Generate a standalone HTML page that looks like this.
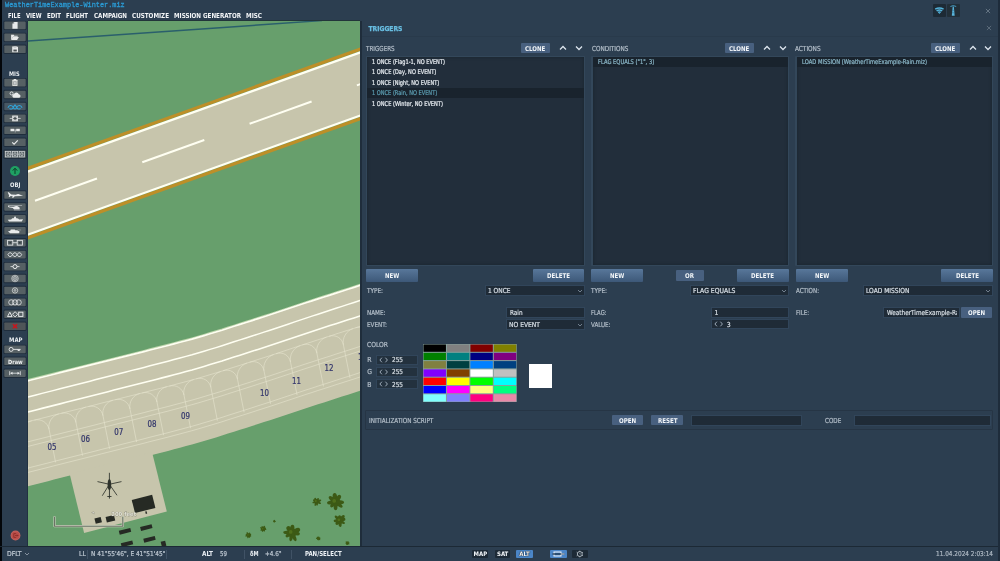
<!DOCTYPE html>
<html lang="en">
<head>
<meta charset="utf-8">
<title>Mission Editor - Triggers</title>
<style>
html,body{margin:0;padding:0;background:#2c3e50;}
body{width:1000px;height:561px;overflow:hidden;position:relative;}
#app{position:absolute;left:0;top:0;width:1000px;height:561px;overflow:hidden;will-change:transform;transform:translateZ(0);}
#app header,#app main,#app nav,#app aside,#app footer{display:block;position:static;margin:0;padding:0;}
#app div{position:absolute;box-sizing:border-box;}
#app svg{position:absolute;overflow:hidden;}
.t{position:absolute;white-space:nowrap;line-height:12px;display:block;}
.f1{font-family:"DejaVu Sans","Liberation Sans",sans-serif;}
.f2{font-family:"DejaVu Sans","Liberation Sans",sans-serif;font-weight:bold;}
.f3{font-family:"DejaVu Sans Condensed","DejaVu Sans","Liberation Sans",sans-serif;font-stretch:condensed;-webkit-text-stroke:0.22px currentColor;}
.f4{font-family:"DejaVu Sans Condensed","DejaVu Sans","Liberation Sans",sans-serif;font-stretch:condensed;font-weight:bold;}
.f5{font-family:"Liberation Mono","DejaVu Sans Mono",monospace;-webkit-text-stroke:0.3px currentColor;}
.f6{font-family:"Liberation Sans",sans-serif;}
.f7{font-family:"Liberation Sans",sans-serif;font-weight:bold;}
.btn{background:linear-gradient(#58779a,#3d5878);border-radius:1px;}
.sbtn{background:#48607f;border-radius:1px;}
.inp{background:#1f2b37;border:1px solid #31455a;}
.lst{background:#222e3b;box-shadow:inset 0 0 3px 0.5px #1b2631;}
.tb{background:#565c5f;border-radius:1px;box-shadow:0 0 0 1px #223040;}
</style>
</head>
<body>
<div id="app">
<div style="left:0.00px;top:0.00px;width:1000.00px;height:561.00px;background:#2c3e50;"></div>
<div style="left:0.00px;top:0.00px;width:2.00px;height:561.00px;background:#03060a;"></div>
<header id="menubar">
<span class="t f5" style="left:5.00px;transform-origin:0 0;top:-0.93px;font-size:7.42px;color:#2b9ad3;transform:scaleX(0.9288);">WeatherTimeExample-Winter.miz</span>
<span class="t f4" style="left:7.50px;transform-origin:0 0;top:9.53px;font-size:6.86px;color:#f4f6f8;transform:scaleX(0.8527);">FILE</span>
<span class="t f4" style="left:25.50px;transform-origin:0 0;top:9.53px;font-size:6.86px;color:#f4f6f8;transform:scaleX(0.8566);">VIEW</span>
<span class="t f4" style="left:47.00px;transform-origin:0 0;top:9.53px;font-size:6.86px;color:#f4f6f8;transform:scaleX(0.8836);">EDIT</span>
<span class="t f4" style="left:66.00px;transform-origin:0 0;top:9.53px;font-size:6.86px;color:#f4f6f8;transform:scaleX(0.8842);">FLIGHT</span>
<span class="t f4" style="left:93.50px;transform-origin:0 0;top:9.53px;font-size:6.86px;color:#f4f6f8;transform:scaleX(0.9008);">CAMPAIGN</span>
<span class="t f4" style="left:132.00px;transform-origin:0 0;top:9.53px;font-size:6.86px;color:#f4f6f8;transform:scaleX(0.9122);">CUSTOMIZE</span>
<span class="t f4" style="left:174.00px;transform-origin:0 0;top:9.53px;font-size:6.86px;color:#f4f6f8;transform:scaleX(0.9087);">MISSION GENERATOR</span>
<span class="t f4" style="left:246.00px;transform-origin:0 0;top:9.53px;font-size:6.86px;color:#f4f6f8;transform:scaleX(0.9191);">MISC</span>
</header>
<main id="map-view">
<svg viewBox="28 21 332.4 525" style="left:28px;top:21px;width:332.4px;height:525px;background:#679f6c">
<line x1="28" y1="41" x2="322" y2="20.6" stroke="#2a5f6c" stroke-width="1.5"/>
<polygon points="20,174.27 370,48.83 370,111.93 20,237.37" fill="#c7c5ac"/>
<line x1="20" y1="171.17" x2="370" y2="45.73" stroke="#bd8f28" stroke-width="3.2"/>
<line x1="20" y1="174.27" x2="370" y2="48.83" stroke="#fffff2" stroke-width="2.3"/>
<line x1="20" y1="240.57" x2="370" y2="115.13" stroke="#bd8f28" stroke-width="3.2"/>
<line x1="20" y1="237.47" x2="370" y2="112.03" stroke="#fffff2" stroke-width="2.3"/>
<line x1="35.0" y1="200.69" x2="97.0" y2="178.47" stroke="#fffff2" stroke-width="2.0"/>
<line x1="142.3" y1="162.23" x2="204.3" y2="140.01" stroke="#fffff2" stroke-width="2.0"/>
<line x1="249.6" y1="123.78" x2="311.6" y2="101.56" stroke="#fffff2" stroke-width="2.0"/>
<line x1="356.9" y1="85.32" x2="418.9" y2="63.10" stroke="#fffff2" stroke-width="2.0"/>
<polygon points="12.0,384.4 18.0,382.9 24.0,381.4 30.0,379.9 36.0,378.4 42.0,376.9 48.0,375.4 54.0,373.8 60.0,372.3 66.0,370.8 72.0,369.3 78.0,367.8 84.0,366.3 90.0,364.8 96.0,363.3 102.0,361.7 108.0,360.2 114.0,358.7 120.0,357.2 126.0,355.7 132.0,354.2 138.0,352.7 144.0,351.2 150.0,349.6 156.0,348.1 162.0,346.6 168.0,345.1 174.0,343.5 180.0,341.9 186.0,340.3 192.0,338.7 198.0,337.0 204.0,335.2 210.0,333.4 216.0,331.6 222.0,329.8 228.0,327.8 234.0,325.9 240.0,324.0 246.0,322.1 252.0,320.2 258.0,318.2 264.0,316.3 270.0,314.4 276.0,312.4 282.0,310.4 288.0,308.4 294.0,306.4 300.0,304.4 306.0,302.4 312.0,300.5 318.0,298.5 324.0,296.6 330.0,294.7 336.0,292.7 342.0,290.8 348.0,288.9 354.0,287.0 360.0,285.0 366.0,283.1 372.0,281.2 378.0,279.2 378.0,385.0 372.0,387.0 366.0,388.9 360.0,390.8 354.0,392.8 348.0,394.7 342.0,396.6 336.0,398.5 330.0,400.5 324.0,402.4 318.0,404.3 312.0,406.3 306.0,408.2 300.0,410.2 294.0,412.2 288.0,414.2 282.0,416.2 276.0,418.2 270.0,420.2 264.0,422.1 258.0,424.0 252.0,426.0 246.0,427.9 240.0,429.8 234.0,431.7 228.0,433.6 222.0,435.6 216.0,437.4 210.0,439.2 204.0,441.0 198.0,442.8 192.0,444.5 186.0,446.1 180.0,447.7 174.0,449.3 168.0,450.9 162.0,452.4 156.0,453.9 150.0,455.4 144.0,457.0 138.0,458.5 132.0,460.0 126.0,461.5 120.0,463.0 114.0,464.5 108.0,466.0 102.0,467.5 96.0,469.1 90.0,470.6 84.0,472.1 78.0,473.6 72.0,475.1 66.0,476.6 60.0,478.1 54.0,479.6 48.0,481.2 42.0,482.7 36.0,484.2 30.0,485.7 24.0,487.2 18.0,488.7 12.0,490.2" fill="#c7c5ac"/>
<polygon points="69.7,474 84.1,533 166.8,511.4 152,452 " fill="#c7c5ac"/>
<polyline points="12.0,445.8 18.0,444.3 24.0,442.8 30.0,441.3 36.0,439.8 42.0,438.3 48.0,436.8 54.0,435.2 60.0,433.7 66.0,432.2 72.0,430.7 78.0,429.2 84.0,427.7 90.0,426.2 96.0,424.7 102.0,423.1 108.0,421.6 114.0,420.1 120.0,418.6 126.0,417.1 132.0,415.6 138.0,414.1 144.0,412.6 150.0,411.0 156.0,409.5 162.0,408.0 168.0,406.5 174.0,404.9 180.0,403.3 186.0,401.7 192.0,400.1 198.0,398.4 204.0,396.6 210.0,394.8 216.0,393.0 222.0,391.2 228.0,389.2 234.0,387.3 240.0,385.4 246.0,383.5 252.0,381.6 258.0,379.6 264.0,377.7 270.0,375.8 276.0,373.8 282.0,371.8 288.0,369.8 294.0,367.8 300.0,365.8 306.0,363.8 312.0,361.9 318.0,359.9 324.0,358.0 330.0,356.1 336.0,354.1 342.0,352.2 348.0,350.3 354.0,348.4 360.0,346.4 366.0,344.5 372.0,342.6 378.0,340.6" fill="none" stroke="#e6e4cf" stroke-width="0.6"/>
<polyline points="12.0,450.4 18.0,448.9 24.0,447.4 30.0,445.9 36.0,444.4 42.0,442.9 48.0,441.4 54.0,439.8 60.0,438.3 66.0,436.8 72.0,435.3 78.0,433.8 84.0,432.3 90.0,430.8 96.0,429.3 102.0,427.7 108.0,426.2 114.0,424.7 120.0,423.2 126.0,421.7 132.0,420.2 138.0,418.7 144.0,417.2 150.0,415.6 156.0,414.1 162.0,412.6 168.0,411.1 174.0,409.5 180.0,407.9 186.0,406.3 192.0,404.7 198.0,403.0 204.0,401.2 210.0,399.4 216.0,397.6 222.0,395.8 228.0,393.8 234.0,391.9 240.0,390.0 246.0,388.1 252.0,386.2 258.0,384.2 264.0,382.3 270.0,380.4 276.0,378.4 282.0,376.4 288.0,374.4 294.0,372.4 300.0,370.4 306.0,368.4 312.0,366.5 318.0,364.5 324.0,362.6 330.0,360.7 336.0,358.7 342.0,356.8 348.0,354.9 354.0,353.0 360.0,351.0 366.0,349.1 372.0,347.2 378.0,345.2" fill="none" stroke="#e6e4cf" stroke-width="0.6"/>
<polyline points="12.0,472.0 18.0,470.5 24.0,469.0 30.0,467.5 36.0,466.0 42.0,464.5 48.0,463.0 54.0,461.4 60.0,459.9 66.0,458.4 72.0,456.9 78.0,455.4 84.0,453.9 90.0,452.4 96.0,450.9 102.0,449.3 108.0,447.8 114.0,446.3 120.0,444.8 126.0,443.3 132.0,441.8 138.0,440.3 144.0,438.8 150.0,437.2 156.0,435.7 162.0,434.2 168.0,432.7 174.0,431.1 180.0,429.5 186.0,427.9 192.0,426.3 198.0,424.6 204.0,422.8 210.0,421.0 216.0,419.2 222.0,417.4 228.0,415.4 234.0,413.5 240.0,411.6 246.0,409.7 252.0,407.8 258.0,405.8 264.0,403.9 270.0,402.0 276.0,400.0 282.0,398.0 288.0,396.0 294.0,394.0 300.0,392.0 306.0,390.0 312.0,388.1 318.0,386.1 324.0,384.2 330.0,382.3 336.0,380.3 342.0,378.4 348.0,376.5 354.0,374.6 360.0,372.6 366.0,370.7 372.0,368.8 378.0,366.8" fill="none" stroke="#e6e4cf" stroke-width="0.6"/>
<polyline points="12.0,476.4 18.0,474.9 24.0,473.4 30.0,471.9 36.0,470.4 42.0,468.9 48.0,467.4 54.0,465.8 60.0,464.3 66.0,462.8 72.0,461.3 78.0,459.8 84.0,458.3 90.0,456.8 96.0,455.3 102.0,453.7 108.0,452.2 114.0,450.7 120.0,449.2 126.0,447.7 132.0,446.2 138.0,444.7 144.0,443.2 150.0,441.6 156.0,440.1 162.0,438.6 168.0,437.1 174.0,435.5 180.0,433.9 186.0,432.3 192.0,430.7 198.0,429.0 204.0,427.2 210.0,425.4 216.0,423.6 222.0,421.8 228.0,419.8 234.0,417.9 240.0,416.0 246.0,414.1 252.0,412.2 258.0,410.2 264.0,408.3 270.0,406.4 276.0,404.4 282.0,402.4 288.0,400.4 294.0,398.4 300.0,396.4 306.0,394.4 312.0,392.5 318.0,390.5 324.0,388.6 330.0,386.7 336.0,384.7 342.0,382.8 348.0,380.9 354.0,379.0 360.0,377.0 366.0,375.1 372.0,373.2 378.0,371.2" fill="none" stroke="#e6e4cf" stroke-width="0.6"/>
<line x1="28.6" y1="469.2" x2="22.1" y2="436.2" stroke="#e6e4cf" stroke-width="0.6"/>
<path d="M22.1,436.2 C20.7,429.3 14.1,425.2 7.4,426.9" fill="none" stroke="#e6e4cf" stroke-width="0.6"/>
<path d="M22.1,436.2 C20.7,429.3 25.1,422.4 31.8,420.7" fill="none" stroke="#e6e4cf" stroke-width="0.6"/>
<line x1="55.6" y1="462.4" x2="49.1" y2="429.4" stroke="#e6e4cf" stroke-width="0.6"/>
<path d="M49.1,429.4 C47.7,422.5 41.1,418.4 34.4,420.1" fill="none" stroke="#e6e4cf" stroke-width="0.6"/>
<path d="M49.1,429.4 C47.7,422.5 52.1,415.6 58.8,413.9" fill="none" stroke="#e6e4cf" stroke-width="0.6"/>
<line x1="82.6" y1="455.6" x2="76.0" y2="422.6" stroke="#e6e4cf" stroke-width="0.6"/>
<path d="M76.0,422.6 C74.7,415.7 68.1,411.6 61.4,413.3" fill="none" stroke="#e6e4cf" stroke-width="0.6"/>
<path d="M76.0,422.6 C74.7,415.7 79.1,408.8 85.8,407.1" fill="none" stroke="#e6e4cf" stroke-width="0.6"/>
<line x1="109.6" y1="448.8" x2="103.0" y2="415.8" stroke="#e6e4cf" stroke-width="0.6"/>
<path d="M103.0,415.8 C101.7,408.9 95.1,404.8 88.4,406.5" fill="none" stroke="#e6e4cf" stroke-width="0.6"/>
<path d="M103.0,415.8 C101.7,408.9 106.0,402.0 112.8,400.3" fill="none" stroke="#e6e4cf" stroke-width="0.6"/>
<line x1="136.6" y1="442.0" x2="130.0" y2="409.0" stroke="#e6e4cf" stroke-width="0.6"/>
<path d="M130.0,409.0 C128.7,402.1 122.1,398.0 115.3,399.7" fill="none" stroke="#e6e4cf" stroke-width="0.6"/>
<path d="M130.0,409.0 C128.7,402.1 133.0,395.2 139.8,393.5" fill="none" stroke="#e6e4cf" stroke-width="0.6"/>
<line x1="163.6" y1="435.2" x2="157.0" y2="402.2" stroke="#e6e4cf" stroke-width="0.6"/>
<path d="M157.0,402.2 C155.6,395.3 149.1,391.2 142.3,392.9" fill="none" stroke="#e6e4cf" stroke-width="0.6"/>
<path d="M157.0,402.2 C155.6,395.3 160.0,388.4 166.8,386.7" fill="none" stroke="#e6e4cf" stroke-width="0.6"/>
<line x1="190.6" y1="428.2" x2="184.0" y2="395.2" stroke="#e6e4cf" stroke-width="0.6"/>
<path d="M184.0,395.2 C182.6,388.3 176.1,384.3 169.4,386.1" fill="none" stroke="#e6e4cf" stroke-width="0.6"/>
<path d="M184.0,395.2 C182.6,388.3 187.0,381.4 193.7,379.5" fill="none" stroke="#e6e4cf" stroke-width="0.6"/>
<line x1="217.4" y1="420.6" x2="210.9" y2="387.5" stroke="#e6e4cf" stroke-width="0.6"/>
<path d="M210.9,387.5 C209.5,380.7 203.0,376.8 196.3,378.8" fill="none" stroke="#e6e4cf" stroke-width="0.6"/>
<path d="M210.9,387.5 C209.5,380.7 213.8,373.6 220.5,371.6" fill="none" stroke="#e6e4cf" stroke-width="0.6"/>
<line x1="244.1" y1="412.3" x2="237.5" y2="379.2" stroke="#e6e4cf" stroke-width="0.6"/>
<path d="M237.5,379.2 C236.2,372.4 229.7,368.6 223.1,370.7" fill="none" stroke="#e6e4cf" stroke-width="0.6"/>
<path d="M237.5,379.2 C236.2,372.4 240.4,365.2 247.1,363.0" fill="none" stroke="#e6e4cf" stroke-width="0.6"/>
<line x1="270.6" y1="403.8" x2="264.0" y2="370.8" stroke="#e6e4cf" stroke-width="0.6"/>
<path d="M264.0,370.8 C262.7,363.9 256.2,360.1 249.6,362.2" fill="none" stroke="#e6e4cf" stroke-width="0.6"/>
<path d="M264.0,370.8 C262.7,363.9 266.9,356.7 273.6,354.6" fill="none" stroke="#e6e4cf" stroke-width="0.6"/>
<line x1="297.1" y1="395.1" x2="290.5" y2="362.1" stroke="#e6e4cf" stroke-width="0.6"/>
<path d="M290.5,362.1 C289.2,355.2 282.7,351.5 276.1,353.7" fill="none" stroke="#e6e4cf" stroke-width="0.6"/>
<path d="M290.5,362.1 C289.2,355.2 293.4,347.9 300.0,345.7" fill="none" stroke="#e6e4cf" stroke-width="0.6"/>
<line x1="323.5" y1="386.4" x2="316.9" y2="353.3" stroke="#e6e4cf" stroke-width="0.6"/>
<path d="M316.9,353.3 C315.6,346.5 309.1,342.7 302.5,344.8" fill="none" stroke="#e6e4cf" stroke-width="0.6"/>
<path d="M316.9,353.3 C315.6,346.5 319.9,339.2 326.5,337.1" fill="none" stroke="#e6e4cf" stroke-width="0.6"/>
<line x1="350.0" y1="377.9" x2="343.4" y2="344.8" stroke="#e6e4cf" stroke-width="0.6"/>
<path d="M343.4,344.8 C342.1,338.0 335.6,334.2 329.0,336.3" fill="none" stroke="#e6e4cf" stroke-width="0.6"/>
<path d="M343.4,344.8 C342.1,338.0 346.3,330.7 353.0,328.6" fill="none" stroke="#e6e4cf" stroke-width="0.6"/>
<line x1="376.5" y1="369.3" x2="369.9" y2="336.3" stroke="#e6e4cf" stroke-width="0.6"/>
<path d="M369.9,336.3 C368.6,329.5 362.1,325.6 355.5,327.8" fill="none" stroke="#e6e4cf" stroke-width="0.6"/>
<path d="M369.9,336.3 C368.6,329.5 372.8,322.2 379.5,320.1" fill="none" stroke="#e6e4cf" stroke-width="0.6"/>
<polyline points="12.0,425.7 18.0,424.2 24.0,422.7 30.0,421.2 36.0,419.7 42.0,418.2 48.0,416.7 54.0,415.1 60.0,413.6 66.0,412.1 72.0,410.6 78.0,409.1 84.0,407.6 90.0,406.1 96.0,404.6 102.0,403.0 108.0,401.5 114.0,400.0 120.0,398.5 126.0,397.0 132.0,395.5 138.0,394.0 144.0,392.5 150.0,390.9 156.0,389.4 162.0,387.9 168.0,386.4 174.0,384.8 180.0,383.2 186.0,381.6 192.0,380.0 198.0,378.3 204.0,376.5 210.0,374.7 216.0,372.9 222.0,371.1 228.0,369.1 234.0,367.2 240.0,365.3 246.0,363.4 252.0,361.5 258.0,359.5 264.0,357.6 270.0,355.7 276.0,353.7 282.0,351.7 288.0,349.7 294.0,347.7 300.0,345.7 306.0,343.7 312.0,341.8 318.0,339.8 324.0,337.9 330.0,336.0 336.0,334.0 342.0,332.1 348.0,330.2 354.0,328.3 360.0,326.3 366.0,324.4 372.0,322.5 378.0,320.5" fill="none" stroke="#e6e4cf" stroke-width="0.6"/>
<polyline points="12.0,383.7 18.0,382.2 24.0,380.7 30.0,379.2 36.0,377.7 42.0,376.2 48.0,374.7 54.0,373.1 60.0,371.6 66.0,370.1 72.0,368.6 78.0,367.1 84.0,365.6 90.0,364.1 96.0,362.6 102.0,361.0 108.0,359.5 114.0,358.0 120.0,356.5 126.0,355.0 132.0,353.5 138.0,352.0 144.0,350.5 150.0,348.9 156.0,347.4 162.0,345.9 168.0,344.4 174.0,342.8 180.0,341.2 186.0,339.6 192.0,338.0 198.0,336.3 204.0,334.5 210.0,332.7 216.0,330.9 222.0,329.1 228.0,327.1 234.0,325.2 240.0,323.3 246.0,321.4 252.0,319.5 258.0,317.5 264.0,315.6 270.0,313.7 276.0,311.7 282.0,309.7 288.0,307.7 294.0,305.7 300.0,303.7 306.0,301.7 312.0,299.8 318.0,297.8 324.0,295.9 330.0,294.0 336.0,292.0 342.0,290.1 348.0,288.2 354.0,286.3 360.0,284.3 366.0,282.4 372.0,280.5 378.0,278.5" fill="none" stroke="#b9d3a8" stroke-width="1.2"/>
<polyline points="12.0,384.8 18.0,383.3 24.0,381.8 30.0,380.3 36.0,378.8 42.0,377.3 48.0,375.8 54.0,374.2 60.0,372.7 66.0,371.2 72.0,369.7 78.0,368.2 84.0,366.7 90.0,365.2 96.0,363.7 102.0,362.1 108.0,360.6 114.0,359.1 120.0,357.6 126.0,356.1 132.0,354.6 138.0,353.1 144.0,351.6 150.0,350.0 156.0,348.5 162.0,347.0 168.0,345.5 174.0,343.9 180.0,342.3 186.0,340.7 192.0,339.1 198.0,337.4 204.0,335.6 210.0,333.8 216.0,332.0 222.0,330.2 228.0,328.2 234.0,326.3 240.0,324.4 246.0,322.5 252.0,320.6 258.0,318.6 264.0,316.7 270.0,314.8 276.0,312.8 282.0,310.8 288.0,308.8 294.0,306.8 300.0,304.8 306.0,302.8 312.0,300.9 318.0,298.9 324.0,297.0 330.0,295.1 336.0,293.1 342.0,291.2 348.0,289.3 354.0,287.4 360.0,285.4 366.0,283.5 372.0,281.6 378.0,279.6" fill="none" stroke="#fffff2" stroke-width="1.7"/>
<polyline points="12.0,401.1 18.0,399.5 24.0,398.0 30.0,396.5 36.0,395.0 42.0,393.4 48.0,391.9 54.0,390.4 60.0,388.8 66.0,387.3 72.0,385.8 78.0,384.2 84.0,382.7 90.0,381.2 96.0,379.6 102.0,378.1 108.0,376.6 114.0,375.0 120.0,373.5 126.0,372.0 132.0,370.4 138.0,368.9 144.0,367.4 150.0,365.8 156.0,364.3 162.0,362.8 168.0,361.2 174.0,359.6 180.0,358.0 186.0,356.4 192.0,354.8 198.0,353.0 204.0,351.2 210.0,349.4 216.0,347.6 222.0,345.7 228.0,343.8 234.0,341.8 240.0,339.9 246.0,338.0 252.0,336.0 258.0,334.1 264.0,332.1 270.0,330.2 276.0,328.2 282.0,326.2 288.0,324.2 294.0,322.1 300.0,320.1 306.0,318.1 312.0,316.1 318.0,314.2 324.0,312.2 330.0,310.3 336.0,308.3 342.0,306.4 348.0,304.4 354.0,302.5 360.0,300.5 366.0,298.6 372.0,296.6 378.0,294.7" fill="none" stroke="#fffff2" stroke-width="1.5"/>
<polyline points="12.0,416.0 18.0,414.5 24.0,413.0 30.0,411.5 36.0,410.0 42.0,408.4 48.0,406.9 54.0,405.4 60.0,403.9 66.0,402.3 72.0,400.8 78.0,399.3 84.0,397.8 90.0,396.2 96.0,394.7 102.0,393.2 108.0,391.7 114.0,390.1 120.0,388.6 126.0,387.1 132.0,385.6 138.0,384.0 144.0,382.5 150.0,381.0 156.0,379.5 162.0,377.9 168.0,376.4 174.0,374.8 180.0,373.2 186.0,371.6 192.0,370.0 198.0,368.2 204.0,366.4 210.0,364.6 216.0,362.8 222.0,361.0 228.0,359.0 234.0,357.1 240.0,355.2 246.0,353.2 252.0,351.3 258.0,349.4 264.0,347.4 270.0,345.5 276.0,343.5 282.0,341.5 288.0,339.5 294.0,337.5 300.0,335.5 306.0,333.4 312.0,331.5 318.0,329.5 324.0,327.6 330.0,325.6 336.0,323.7 342.0,321.7 348.0,319.8 354.0,317.9 360.0,315.9 366.0,314.0 372.0,312.0 378.0,310.1" fill="none" stroke="#fffff2" stroke-width="1.6"/>
<rect x="-10.5" y="-6.8" width="21.0" height="13.5" fill="#262a24" transform="translate(143.6 504.0) rotate(-14)"/>
<rect x="-0.7" y="-1.2" width="1.4" height="2.4" fill="#262a24" transform="translate(146.2 512.6) rotate(-14)"/>
<rect x="-1.2" y="-1.0" width="2.4" height="2.0" fill="#262a24" transform="translate(133.6 501.2) rotate(-14)"/>
<rect x="-3.2" y="-2.7" width="6.4" height="5.4" fill="#262a24" transform="translate(98.2 520.4) rotate(-14)"/>
<rect x="-4.3" y="-2.8" width="8.6" height="5.6" fill="#262a24" transform="translate(110.4 518.8) rotate(-14)"/>
<rect x="-5.9" y="-2.0" width="11.8" height="4.0" fill="#262a24" transform="translate(125.0 531.3) rotate(-14)"/>
<rect x="-5.9" y="-2.0" width="11.8" height="4.0" fill="#262a24" transform="translate(146.3 527.6) rotate(-14)"/>
<rect x="-5.9" y="-2.0" width="11.8" height="4.0" fill="#262a24" transform="translate(149.5 539.3) rotate(-14)"/>
<rect x="-5.9" y="-2.0" width="11.8" height="4.0" fill="#262a24" transform="translate(127.0 543.8) rotate(-14)"/>
<rect x="-2.3" y="-2.6" width="4.6" height="5.2" fill="#262a24" transform="translate(163.5 543.8) rotate(-14)"/>
<g transform="translate(109.4 484.3)" fill="#2e332c" stroke="#2e332c"><ellipse cx="0" cy="0.2" rx="1.8" ry="5.6" stroke="none"/><rect x="-0.45" y="4" width="0.9" height="10.3" stroke="none"/><rect x="-2.1" y="11.7" width="4.2" height="0.9" stroke="none"/><g stroke-width="0.85" stroke-linecap="round"><line x1="0" y1="0" x2="0" y2="-11.1"/><line x1="0" y1="0" x2="11.7" y2="-2.6"/><line x1="0" y1="0" x2="7.4" y2="10.7"/><line x1="0" y1="0" x2="-6.9" y2="11.1"/><line x1="0" y1="0" x2="-11.5" y2="-2.6"/></g></g>
<path d="M54.5,517 V526.2 H122.8 V517" fill="none" stroke="#c9d2bd" stroke-width="2.2" stroke-linejoin="round" stroke-linecap="round"/>
<path d="M54.5,517 V526.2 H122.8 V517" fill="none" stroke="#6c7266" stroke-width="1.1" stroke-linejoin="round" stroke-linecap="round"/>
<text x="111.2" y="516.3" font-family="&quot;DejaVu Sans&quot;,&quot;Liberation Sans&quot;,sans-serif" font-size="5.6" font-weight="bold" fill="#e2e2d6" stroke="#66665a" stroke-width="0.4" paint-order="stroke" textLength="25" lengthAdjust="spacingAndGlyphs">200 feet</text>
<path d="M91.6,512.6 l2.4,-0.8 l0.3,2.2 z" fill="#f4f4ea" stroke="#55554a" stroke-width="0.3"/>
<g transform="translate(316.5 501.5)" fill="#3c5a15"><circle r="2.53"/><ellipse cx="2.37" cy="0" rx="2.28" ry="0.95" transform="rotate(110)"/><ellipse cx="2.19" cy="0" rx="2.10" ry="0.95" transform="rotate(162)"/><ellipse cx="1.98" cy="0" rx="1.91" ry="1.12" transform="rotate(207)"/><ellipse cx="2.02" cy="0" rx="1.94" ry="1.12" transform="rotate(243)"/><ellipse cx="2.04" cy="0" rx="1.96" ry="1.02" transform="rotate(303)"/><ellipse cx="2.55" cy="0" rx="2.45" ry="1.19" transform="rotate(344)"/><ellipse cx="2.57" cy="0" rx="2.47" ry="0.94" transform="rotate(385)"/><ellipse cx="2.14" cy="0" rx="2.06" ry="0.99" transform="rotate(439)"/><circle cx="-0.69" cy="-0.46" r="1.01" fill="#4f6f1c"/></g>
<g transform="translate(335.5 501.8)" fill="#3c5a15"><circle r="4.62"/><ellipse cx="4.51" cy="0" rx="4.34" ry="1.83" transform="rotate(39)"/><ellipse cx="4.31" cy="0" rx="4.14" ry="1.99" transform="rotate(89)"/><ellipse cx="3.65" cy="0" rx="3.51" ry="1.73" transform="rotate(133)"/><ellipse cx="4.35" cy="0" rx="4.19" ry="2.04" transform="rotate(172)"/><ellipse cx="4.25" cy="0" rx="4.08" ry="2.06" transform="rotate(219)"/><ellipse cx="4.48" cy="0" rx="4.31" ry="2.27" transform="rotate(263)"/><ellipse cx="4.23" cy="0" rx="4.07" ry="2.12" transform="rotate(307)"/><ellipse cx="4.41" cy="0" rx="4.24" ry="1.92" transform="rotate(365)"/><circle cx="-1.26" cy="-0.84" r="1.85" fill="#4f6f1c"/></g>
<g transform="translate(339.8 520.5)" fill="#3c5a15"><circle r="3.41"/><ellipse cx="2.99" cy="0" rx="2.88" ry="1.71" transform="rotate(345)"/><ellipse cx="3.05" cy="0" rx="2.94" ry="1.26" transform="rotate(391)"/><ellipse cx="3.28" cy="0" rx="3.16" ry="1.60" transform="rotate(446)"/><ellipse cx="2.91" cy="0" rx="2.79" ry="1.67" transform="rotate(495)"/><ellipse cx="3.13" cy="0" rx="3.01" ry="1.52" transform="rotate(535)"/><ellipse cx="3.44" cy="0" rx="3.30" ry="1.53" transform="rotate(585)"/><ellipse cx="2.69" cy="0" rx="2.59" ry="1.67" transform="rotate(626)"/><ellipse cx="3.48" cy="0" rx="3.34" ry="1.75" transform="rotate(671)"/><circle cx="-0.93" cy="-0.62" r="1.36" fill="#4f6f1c"/></g>
<g transform="translate(292.0 532.8)" fill="#3c5a15"><circle r="4.62"/><ellipse cx="4.34" cy="0" rx="4.17" ry="1.70" transform="rotate(100)"/><ellipse cx="3.77" cy="0" rx="3.63" ry="1.78" transform="rotate(147)"/><ellipse cx="4.45" cy="0" rx="4.28" ry="1.79" transform="rotate(184)"/><ellipse cx="4.03" cy="0" rx="3.87" ry="2.41" transform="rotate(232)"/><ellipse cx="4.09" cy="0" rx="3.93" ry="2.14" transform="rotate(274)"/><ellipse cx="4.51" cy="0" rx="4.34" ry="2.41" transform="rotate(335)"/><ellipse cx="4.05" cy="0" rx="3.90" ry="1.98" transform="rotate(368)"/><ellipse cx="4.67" cy="0" rx="4.49" ry="1.81" transform="rotate(425)"/><circle cx="-1.26" cy="-0.84" r="1.85" fill="#4f6f1c"/></g>
<g transform="translate(263.2 529.0)" fill="#3c5a15"><circle r="1.81"/><ellipse cx="1.51" cy="0" rx="1.45" ry="0.82" transform="rotate(58)"/><ellipse cx="1.52" cy="0" rx="1.47" ry="0.66" transform="rotate(110)"/><ellipse cx="1.57" cy="0" rx="1.51" ry="0.85" transform="rotate(152)"/><ellipse cx="1.72" cy="0" rx="1.65" ry="0.83" transform="rotate(208)"/><ellipse cx="1.71" cy="0" rx="1.64" ry="0.68" transform="rotate(246)"/><ellipse cx="1.76" cy="0" rx="1.69" ry="0.95" transform="rotate(296)"/><ellipse cx="1.58" cy="0" rx="1.52" ry="0.79" transform="rotate(339)"/><ellipse cx="1.69" cy="0" rx="1.63" ry="0.68" transform="rotate(371)"/><circle cx="-0.49" cy="-0.33" r="0.73" fill="#4f6f1c"/></g>
<g transform="translate(248.5 535.4)" fill="#3c5a15"><circle r="1.81"/><ellipse cx="1.48" cy="0" rx="1.42" ry="0.77" transform="rotate(18)"/><ellipse cx="1.41" cy="0" rx="1.35" ry="0.71" transform="rotate(60)"/><ellipse cx="1.57" cy="0" rx="1.51" ry="0.67" transform="rotate(106)"/><ellipse cx="1.68" cy="0" rx="1.62" ry="0.71" transform="rotate(167)"/><ellipse cx="1.56" cy="0" rx="1.50" ry="0.78" transform="rotate(199)"/><ellipse cx="1.79" cy="0" rx="1.72" ry="0.99" transform="rotate(242)"/><ellipse cx="1.62" cy="0" rx="1.56" ry="0.69" transform="rotate(294)"/><ellipse cx="1.56" cy="0" rx="1.50" ry="0.75" transform="rotate(331)"/><circle cx="-0.49" cy="-0.33" r="0.73" fill="#4f6f1c"/></g>
<g transform="translate(274.4 521.3)" fill="#3c5a15"><circle r="0.77"/><ellipse cx="0.60" cy="0" rx="0.58" ry="0.41" transform="rotate(292)"/><ellipse cx="0.62" cy="0" rx="0.60" ry="0.36" transform="rotate(344)"/><ellipse cx="0.70" cy="0" rx="0.67" ry="0.42" transform="rotate(379)"/><ellipse cx="0.73" cy="0" rx="0.70" ry="0.32" transform="rotate(441)"/><ellipse cx="0.63" cy="0" rx="0.60" ry="0.39" transform="rotate(476)"/><ellipse cx="0.74" cy="0" rx="0.72" ry="0.33" transform="rotate(524)"/><ellipse cx="0.75" cy="0" rx="0.72" ry="0.42" transform="rotate(563)"/><ellipse cx="0.75" cy="0" rx="0.72" ry="0.39" transform="rotate(620)"/><circle cx="-0.21" cy="-0.14" r="0.31" fill="#4f6f1c"/></g>
<g transform="translate(318.4 538.4)" fill="#3c5a15"><circle r="1.21"/><ellipse cx="1.09" cy="0" rx="1.05" ry="0.52" transform="rotate(261)"/><ellipse cx="0.95" cy="0" rx="0.91" ry="0.50" transform="rotate(302)"/><ellipse cx="1.14" cy="0" rx="1.10" ry="0.65" transform="rotate(352)"/><ellipse cx="1.22" cy="0" rx="1.17" ry="0.66" transform="rotate(400)"/><ellipse cx="1.05" cy="0" rx="1.01" ry="0.49" transform="rotate(455)"/><ellipse cx="1.00" cy="0" rx="0.96" ry="0.48" transform="rotate(486)"/><ellipse cx="1.21" cy="0" rx="1.16" ry="0.62" transform="rotate(539)"/><ellipse cx="1.13" cy="0" rx="1.09" ry="0.62" transform="rotate(581)"/><circle cx="-0.33" cy="-0.22" r="0.48" fill="#4f6f1c"/></g>
<g transform="translate(347.4 543.0)" fill="#3c5a15"><circle r="1.21"/><ellipse cx="1.21" cy="0" rx="1.16" ry="0.61" transform="rotate(34)"/><ellipse cx="1.08" cy="0" rx="1.04" ry="0.48" transform="rotate(81)"/><ellipse cx="1.04" cy="0" rx="1.00" ry="0.62" transform="rotate(126)"/><ellipse cx="1.06" cy="0" rx="1.02" ry="0.53" transform="rotate(175)"/><ellipse cx="1.15" cy="0" rx="1.11" ry="0.48" transform="rotate(219)"/><ellipse cx="0.98" cy="0" rx="0.95" ry="0.64" transform="rotate(248)"/><ellipse cx="0.98" cy="0" rx="0.94" ry="0.62" transform="rotate(307)"/><ellipse cx="1.13" cy="0" rx="1.09" ry="0.52" transform="rotate(355)"/><circle cx="-0.33" cy="-0.22" r="0.48" fill="#4f6f1c"/></g>
<text x="47.6" y="449.9" font-family="&quot;DejaVu Sans&quot;,&quot;Liberation Sans&quot;,sans-serif" font-size="8.9" fill="#33366c" stroke="#33366c" stroke-width="0.25" textLength="9" lengthAdjust="spacingAndGlyphs">05</text>
<text x="81.0" y="442.2" font-family="&quot;DejaVu Sans&quot;,&quot;Liberation Sans&quot;,sans-serif" font-size="8.9" fill="#33366c" stroke="#33366c" stroke-width="0.25" textLength="9" lengthAdjust="spacingAndGlyphs">06</text>
<text x="114.2" y="434.6" font-family="&quot;DejaVu Sans&quot;,&quot;Liberation Sans&quot;,sans-serif" font-size="8.9" fill="#33366c" stroke="#33366c" stroke-width="0.25" textLength="9" lengthAdjust="spacingAndGlyphs">07</text>
<text x="147.6" y="426.6" font-family="&quot;DejaVu Sans&quot;,&quot;Liberation Sans&quot;,sans-serif" font-size="8.9" fill="#33366c" stroke="#33366c" stroke-width="0.25" textLength="9" lengthAdjust="spacingAndGlyphs">08</text>
<text x="181.0" y="418.9" font-family="&quot;DejaVu Sans&quot;,&quot;Liberation Sans&quot;,sans-serif" font-size="8.9" fill="#33366c" stroke="#33366c" stroke-width="0.25" textLength="9" lengthAdjust="spacingAndGlyphs">09</text>
<text x="259.9" y="395.6" font-family="&quot;DejaVu Sans&quot;,&quot;Liberation Sans&quot;,sans-serif" font-size="8.9" fill="#33366c" stroke="#33366c" stroke-width="0.25" textLength="9" lengthAdjust="spacingAndGlyphs">10</text>
<text x="291.9" y="383.6" font-family="&quot;DejaVu Sans&quot;,&quot;Liberation Sans&quot;,sans-serif" font-size="8.9" fill="#33366c" stroke="#33366c" stroke-width="0.25" textLength="9" lengthAdjust="spacingAndGlyphs">11</text>
<text x="324.6" y="371.4" font-family="&quot;DejaVu Sans&quot;,&quot;Liberation Sans&quot;,sans-serif" font-size="8.9" fill="#33366c" stroke="#33366c" stroke-width="0.25" textLength="9" lengthAdjust="spacingAndGlyphs">12</text>
<text x="358.1" y="359.8" font-family="&quot;DejaVu Sans&quot;,&quot;Liberation Sans&quot;,sans-serif" font-size="8.9" fill="#33366c" stroke="#33366c" stroke-width="0.25" textLength="9" lengthAdjust="spacingAndGlyphs">13</text>
</svg>
</main>
<nav id="toolbar">
<svg viewBox="2 19 26 12" style="left:2px;top:19px;width:26px;height:12px"><rect x="3.4" y="20.70" width="23.2" height="9.4" rx="1.4" fill="#1f2d3c"/><rect x="4.3" y="21.60" width="21.4" height="7.6" rx="0.9" fill="#566064"/><g transform="translate(4.3 21.70)"><path d="M9.9,0.4 h3.4 v6.6 h-5.2 v-4.8 z" fill="#e9ebec"/><path d="M8.1,2.2 l1.8,-1.8 v1.8 z" fill="#aeb3b5"/></g></svg>
<svg viewBox="2 31 26 12" style="left:2px;top:31px;width:26px;height:12px"><rect x="3.4" y="32.63" width="23.2" height="9.4" rx="1.4" fill="#1f2d3c"/><rect x="4.3" y="33.53" width="21.4" height="7.6" rx="0.9" fill="#566064"/><g transform="translate(4.3 33.63)"><path d="M6.8,1.2 h2.6 l0.7,0.8 h3.3 v1 h-4.6 l-2,3.3 z" fill="#e9ebec"/><path d="M8.6,3.4 h6 l-1.8,3 h-6 z" fill="#e9ebec"/></g></svg>
<svg viewBox="2 43 26 12" style="left:2px;top:43px;width:26px;height:12px"><rect x="3.4" y="44.56" width="23.2" height="9.4" rx="1.4" fill="#1f2d3c"/><rect x="4.3" y="45.46" width="21.4" height="7.6" rx="0.9" fill="#566064"/><g transform="translate(4.3 45.56)"><path d="M7.9,0.9 h5 l0.8,0.8 v4.9 h-5.8 z" fill="#e9ebec"/><rect x="9.1" y="4" width="3.4" height="1.9" fill="#4a5154"/><rect x="9.3" y="0.9" width="2.8" height="1.7" fill="#c9cdce"/></g></svg>
<span class="t f4" style="left:9.00px;transform-origin:0 0;top:67.91px;font-size:6.17px;color:#e8ecef;transform:scaleX(0.9230);">MIS</span>
<svg viewBox="2 76 26 12" style="left:2px;top:76px;width:26px;height:12px"><rect x="3.4" y="77.90" width="23.2" height="9.4" rx="1.4" fill="#1f2d3c"/><rect x="4.3" y="78.80" width="21.4" height="7.6" rx="0.9" fill="#566064"/><g transform="translate(4.3 78.90)"><rect x="8" y="0.9" width="5.2" height="6.1" rx="0.5" fill="#dcdedb"/><rect x="9.4" y="0.2" width="2.4" height="1.5" rx="0.3" fill="#e9ebec"/><rect x="9" y="2.4" width="3.2" height="3.8" fill="#8f9597"/><rect x="9.7" y="2.9" width="1.8" height="2.8" fill="#c9cdce"/></g></svg>
<svg viewBox="2 88 26 12" style="left:2px;top:88px;width:26px;height:12px"><rect x="3.4" y="89.83" width="23.2" height="9.4" rx="1.4" fill="#1f2d3c"/><rect x="4.3" y="90.73" width="21.4" height="7.6" rx="0.9" fill="#566064"/><g transform="translate(4.3 90.83)"><circle cx="7.3" cy="2.6" r="1.55" fill="none" stroke="#e9ebec" stroke-width="0.9"/><path d="M9.3,6.9 a1.9,1.9 0 0 1 0.4,-3.7 a2.6,2.6 0 0 1 4.8,0.2 a1.8,1.8 0 0 1 0.5,3.5 z" fill="#e9ebec"/></g></svg>
<svg viewBox="2 100 26 12" style="left:2px;top:100px;width:26px;height:12px"><rect x="3.4" y="101.76" width="23.2" height="9.4" rx="1.4" fill="#1f2d3c"/><rect x="4.3" y="102.66" width="21.4" height="7.6" rx="0.9" fill="#475763"/><g transform="translate(4.3 102.76)"><path d="M3.6,4.9 c1.2,-2.6 3.6,-2.8 5.4,-0.6 l1.7,-2.2 l1.7,2.2 c1.8,-2.2 4.2,-2 5.4,0.6 M5.2,5.6 c1.2,1.2 2.9,0.9 3.8,-0.9 c0.9,1.8 2.5,2.2 3.4,0 c0.9,1.8 2.6,2.1 3.8,0.9" fill="none" stroke="#2fa5dc" stroke-width="1.05"/></g></svg>
<svg viewBox="2 112 26 12" style="left:2px;top:112px;width:26px;height:12px"><rect x="3.4" y="113.69" width="23.2" height="9.4" rx="1.4" fill="#1f2d3c"/><rect x="4.3" y="114.59" width="21.4" height="7.6" rx="0.9" fill="#566064"/><g transform="translate(4.3 114.69)"><rect x="7.9" y="0.9" width="5.7" height="5.7" fill="#e9ebec"/><path d="M5.4,3.75 h2.5 M13.6,3.75 h2.8" stroke="#e9ebec" stroke-width="0.7" fill="none"/><path d="M9.3,2.3 l2.9,2.9 M12.2,2.3 l-2.9,2.9 M10.75,1.7 v4.1 M8.7,3.75 h4.1" stroke="#3a4144" stroke-width="0.75" fill="none"/></g></svg>
<svg viewBox="2 124 26 12" style="left:2px;top:124px;width:26px;height:12px"><rect x="3.4" y="125.62" width="23.2" height="9.4" rx="1.4" fill="#1f2d3c"/><rect x="4.3" y="126.52" width="21.4" height="7.6" rx="0.9" fill="#566064"/><g transform="translate(4.3 126.62)"><rect x="6.2" y="2.2" width="3.6" height="2.4" fill="#e9ebec"/><rect x="11.9" y="2.2" width="3.6" height="2.4" fill="#e9ebec"/><rect x="9.8" y="3" width="2.1" height="0.8" fill="#e9ebec"/><rect x="10.5" y="3.6" width="0.7" height="2.2" fill="#cfd3d4"/></g></svg>
<svg viewBox="2 136 26 12" style="left:2px;top:136px;width:26px;height:12px"><rect x="3.4" y="137.55" width="23.2" height="9.4" rx="1.4" fill="#1f2d3c"/><rect x="4.3" y="138.45" width="21.4" height="7.6" rx="0.9" fill="#566064"/><g transform="translate(4.3 138.55)"><path d="M7.9,3.8 l1.9,1.9 l3.7,-3.8" fill="none" stroke="#e9ebec" stroke-width="1.15"/></g></svg>
<svg viewBox="2 148 26 12" style="left:2px;top:148px;width:26px;height:12px"><rect x="3.4" y="149.48" width="23.2" height="9.4" rx="1.4" fill="#1f2d3c"/><rect x="4.3" y="150.38" width="21.4" height="7.6" rx="0.9" fill="#566064"/><g transform="translate(4.3 150.48)"><g fill="none" stroke="#d4d8d9" stroke-width="0.7"><rect x="1.2" y="1" width="5.3" height="5.4"/><rect x="8.05" y="1" width="5.3" height="5.4"/><rect x="14.9" y="1" width="5.3" height="5.4"/><path d="M6.5,3.7 h1.55 M13.35,3.7 h1.55"/><ellipse cx="3.85" cy="3.7" rx="1.1" ry="1.6"/><ellipse cx="10.7" cy="3.7" rx="1.1" ry="1.6"/><ellipse cx="17.55" cy="3.7" rx="1.1" ry="1.6"/></g></g></svg>
<svg viewBox="0 0 12 12" style="left:9.2px;top:164.5px;width:12px;height:12px"><circle cx="6" cy="6" r="5" fill="#1fa063"/><path d="M6,9 V3.6 M3.8,5.6 L6,3.2 L8.2,5.6" fill="none" stroke="#0d3a28" stroke-width="1"/></svg>
<span class="t f4" style="left:9.80px;transform-origin:0 0;top:179.21px;font-size:6.17px;color:#e8ecef;transform:scaleX(0.9440);">OBJ</span>
<svg viewBox="2 189 26 12" style="left:2px;top:189px;width:26px;height:12px"><rect x="3.4" y="190.30" width="23.2" height="9.4" rx="1.4" fill="#1f2d3c"/><rect x="4.3" y="191.20" width="21.4" height="7.6" rx="0.9" fill="#566064"/><g transform="translate(4.3 191.30)"><path d="M3.4,0.9 l1,0 l2.6,2.3 l4.6,0.2 c1.6,-1.1 3.2,-0.9 4.2,0 l3,0.7 l-2.8,0.6 l-5.6,0.3 l-1.4,1.4 l-1.2,0 l0.6,-1.5 l-2,-0.1 l-1.2,0.9 l-0.8,0 l0.4,-1.6 z" fill="#e9ebec"/></g></svg>
<svg viewBox="2 200 26 12" style="left:2px;top:200px;width:26px;height:12px"><rect x="3.4" y="202.23" width="23.2" height="9.4" rx="1.4" fill="#1f2d3c"/><rect x="4.3" y="203.13" width="21.4" height="7.6" rx="0.9" fill="#566064"/><g transform="translate(4.3 203.23)"><path d="M3.8,1.8 h14 v0.55 h-14 z" fill="#d9dcdd"/><path d="M3.6,3.1 l0.8,-0.5 l0.9,1 l4.4,0 c0.8,-1 3.6,-1.2 5.2,0.5 c0.9,0.8 0.8,1.6 -0.2,1.9 l-4.8,0 c-0.8,-0.3 -1,-0.9 -1.4,-1.3 l-4.2,-0.6 z" fill="#e9ebec"/><path d="M9.6,6.7 h6.4" stroke="#e9ebec" stroke-width="0.5"/></g></svg>
<svg viewBox="2 212 26 12" style="left:2px;top:212px;width:26px;height:12px"><rect x="3.4" y="214.16" width="23.2" height="9.4" rx="1.4" fill="#1f2d3c"/><rect x="4.3" y="215.06" width="21.4" height="7.6" rx="0.9" fill="#566064"/><g transform="translate(4.3 215.16)"><path d="M3.4,4.6 l3.4,-0.2 l1.2,-1.3 l1.4,0 l0.9,-1.7 l1,0 l0.7,1.7 l1.8,0.2 l1,1 l4,-0.2 l-1.4,2.2 l-12.6,0 z" fill="#e9ebec"/></g></svg>
<svg viewBox="2 224 26 12" style="left:2px;top:224px;width:26px;height:12px"><rect x="3.4" y="226.09" width="23.2" height="9.4" rx="1.4" fill="#1f2d3c"/><rect x="4.3" y="226.99" width="21.4" height="7.6" rx="0.9" fill="#566064"/><g transform="translate(4.3 227.09)"><g transform="translate(-1.8 0)"><path d="M5.6,3.9 h2 l0.7,-1.6 h3.9 l0.6,0.9 h2.3 l0.4,0.7 h0.9 l0.8,0.9 l-1,1.3 h-8.6 l-1.3,-1.1 z" fill="#e9ebec"/><path d="M15,2.9 h3.6" stroke="#b9bec0" stroke-width="0.5"/></g></g></svg>
<svg viewBox="2 236 26 12" style="left:2px;top:236px;width:26px;height:12px"><rect x="3.4" y="238.02" width="23.2" height="9.4" rx="1.4" fill="#1f2d3c"/><rect x="4.3" y="238.92" width="21.4" height="7.6" rx="0.9" fill="#566064"/><g transform="translate(4.3 239.02)"><g fill="none" stroke="#e9ebec" stroke-width="0.85"><rect x="3.3" y="1.3" width="5.2" height="4.8"/><rect x="12.9" y="1.3" width="5.2" height="4.8"/><path d="M8.5,3.7 h4.4"/></g><rect x="5.2" y="3" width="1.4" height="1.4" fill="#30383c"/><rect x="14.8" y="3" width="1.4" height="1.4" fill="#30383c"/></g></svg>
<svg viewBox="2 248 26 12" style="left:2px;top:248px;width:26px;height:12px"><rect x="3.4" y="249.95" width="23.2" height="9.4" rx="1.4" fill="#1f2d3c"/><rect x="4.3" y="250.85" width="21.4" height="7.6" rx="0.9" fill="#566064"/><g transform="translate(4.3 250.95)"><g fill="none" stroke="#e9ebec" stroke-width="0.85"><path d="M3.6,3.7 l1.4,-1.8 h1.8 l1.4,1.8 l-1.4,1.8 h-1.8 z M8.2,3.7 l1.4,-1.8 h1.8 l1.4,1.8 l-1.4,1.8 h-1.8 z M12.8,3.7 l1.4,-1.8 h1.8 l1.4,1.8 l-1.4,1.8 h-1.8 z"/></g></g></svg>
<svg viewBox="2 260 26 12" style="left:2px;top:260px;width:26px;height:12px"><rect x="3.4" y="261.88" width="23.2" height="9.4" rx="1.4" fill="#1f2d3c"/><rect x="4.3" y="262.78" width="21.4" height="7.6" rx="0.9" fill="#566064"/><g transform="translate(4.3 262.88)"><g fill="none" stroke="#e9ebec"><circle cx="10.7" cy="3.7" r="2.0" stroke-width="1.0"/><path d="M6.2,3.7 h2.5 M12.7,3.7 h2.5" stroke-width="0.8"/></g></g></svg>
<svg viewBox="2 272 26 12" style="left:2px;top:272px;width:26px;height:12px"><rect x="3.4" y="273.81" width="23.2" height="9.4" rx="1.4" fill="#1f2d3c"/><rect x="4.3" y="274.71" width="21.4" height="7.6" rx="0.9" fill="#566064"/><g transform="translate(4.3 274.81)"><g fill="none" stroke="#dadddd" stroke-width="0.7"><circle cx="10.7" cy="3.7" r="3.3"/><circle cx="10.7" cy="3.7" r="2.1"/><circle cx="10.7" cy="3.7" r="0.9"/></g></g></svg>
<svg viewBox="2 284 26 12" style="left:2px;top:284px;width:26px;height:12px"><rect x="3.4" y="285.74" width="23.2" height="9.4" rx="1.4" fill="#1f2d3c"/><rect x="4.3" y="286.64" width="21.4" height="7.6" rx="0.9" fill="#566064"/><g transform="translate(4.3 286.74)"><g fill="none" stroke="#dadddd" stroke-width="0.8"><circle cx="10.7" cy="3.7" r="2.7"/><circle cx="10.7" cy="3.7" r="0.9"/></g></g></svg>
<svg viewBox="2 296 26 12" style="left:2px;top:296px;width:26px;height:12px"><rect x="3.4" y="297.67" width="23.2" height="9.4" rx="1.4" fill="#1f2d3c"/><rect x="4.3" y="298.57" width="21.4" height="7.6" rx="0.9" fill="#566064"/><g transform="translate(4.3 298.67)"><g fill="none" stroke="#e9ebec" stroke-width="0.75"><circle cx="7" cy="3.7" r="2.6"/><circle cx="10.7" cy="3.7" r="2.6"/><circle cx="14.4" cy="3.7" r="2.6"/></g></g></svg>
<svg viewBox="2 308 26 12" style="left:2px;top:308px;width:26px;height:12px"><rect x="3.4" y="309.60" width="23.2" height="9.4" rx="1.4" fill="#1f2d3c"/><rect x="4.3" y="310.50" width="21.4" height="7.6" rx="0.9" fill="#566064"/><g transform="translate(4.3 310.60)"><g fill="none" stroke="#e9ebec" stroke-width="0.95"><path d="M3.2,6 l2.3,-4.4 l2.3,4.4 z"/><path d="M10.8,1.1 l2.6,2.6 l-2.6,2.6 l-2.6,-2.6 z"/><rect x="14.4" y="1.6" width="4.2" height="4.2"/></g></g></svg>
<svg viewBox="2 320 26 12" style="left:2px;top:320px;width:26px;height:12px"><rect x="3.4" y="321.53" width="23.2" height="9.4" rx="1.4" fill="#1f2d3c"/><rect x="4.3" y="322.43" width="21.4" height="7.6" rx="0.9" fill="#4f5558"/><g transform="translate(4.3 322.53)"><path d="M8.7,1.7 l4,4 M12.7,1.7 l-4,4" stroke="#c8161e" stroke-width="1.7" fill="none"/></g></svg>
<span class="t f4" style="left:8.80px;transform-origin:0 0;top:334.31px;font-size:6.17px;color:#e8ecef;transform:scaleX(0.9787);">MAP</span>
<svg viewBox="2 343 26 12" style="left:2px;top:343px;width:26px;height:12px"><rect x="3.4" y="344.70" width="23.2" height="9.4" rx="1.4" fill="#1f2d3c"/><rect x="4.3" y="345.60" width="21.4" height="7.6" rx="0.9" fill="#566064"/><g transform="translate(4.3 345.70)"><g fill="none" stroke="#e9ebec" stroke-width="0.9"><circle cx="6.8" cy="3.7" r="2"/><path d="M8.8,3.7 h7.4"/></g><path d="M12.6,3.7 h3.8 l-1.4,1.6 h-1.2 z" fill="#e9ebec"/></g></svg>
<svg viewBox="2 355 26 12" style="left:2px;top:355px;width:26px;height:12px"><rect x="3.4" y="356.60" width="23.2" height="9.4" rx="1.4" fill="#1f2d3c"/><rect x="4.3" y="357.50" width="21.4" height="7.6" rx="0.9" fill="#566064"/><g transform="translate(4.3 357.60)"></g></svg>
<svg viewBox="2 367 26 12" style="left:2px;top:367px;width:26px;height:12px"><rect x="3.4" y="368.50" width="23.2" height="9.4" rx="1.4" fill="#1f2d3c"/><rect x="4.3" y="369.40" width="21.4" height="7.6" rx="0.9" fill="#566064"/><g transform="translate(4.3 369.50)"><g fill="none" stroke="#e9ebec" stroke-width="0.8"><path d="M5.4,1.7 v4 M16,1.7 v4 M6.4,3.7 h8.6"/></g><path d="M6,3.7 l2.2,-1.5 v3 z M15.4,3.7 l-2.2,-1.5 v3 z" fill="#e9ebec"/></g></svg>
<span class="t f2" style="left:7.60px;transform-origin:0 0;top:355.51px;font-size:5.76px;color:#f1f3f4;transform:scaleX(0.8792);">Draw</span>
<svg viewBox="0 0 11 11" style="left:9.9px;top:529.6px;width:11px;height:11px"><circle cx="5.5" cy="5.5" r="4.9" fill="#c4645f"/><circle cx="5.5" cy="5.5" r="4.1" fill="#b94f4b"/><path d="M6.2,3.6 h-2.4 v3.8 h2.4 M5,5.5 h3 M7,4.5 l1,1 l-1,1" fill="none" stroke="#8a2622" stroke-width="0.75"/></svg>
<div style="left:27.20px;top:21.00px;width:0.90px;height:525.00px;background:#223141;"></div>
</nav>
<aside id="triggers-panel">
<div style="left:360.40px;top:21.00px;width:1.30px;height:525.00px;background:#1f2d3b;"></div>
<div style="left:28.00px;top:20.20px;width:332.40px;height:1.00px;background:#22353a;"></div>
<div style="left:361.70px;top:35.80px;width:636.80px;height:1.00px;background:#293a4b;"></div>
<span class="t f4" style="left:368.40px;transform-origin:0 0;top:22.72px;font-size:6.72px;color:#68bde0;-webkit-text-stroke:0.25px #68bde0;">TRIGGERS</span>
<div style="left:933.00px;top:4.30px;width:12.80px;height:12.60px;background:#1d2a35;border-radius:1px;"><svg viewBox="0 0 12.8 12.6" style="left:0;top:0;width:12.8px;height:12.6px"><g fill="none" stroke="#52b1d9" stroke-width="1.45"><path d="M2.2,5.2 q4.2,-2.6 8.4,0"/><path d="M3.6,6.9 q2.8,-1.8 5.6,0"/><path d="M5,8.4 q1.4,-0.9 2.8,0"/></g><path d="M5.4,8.8 h2 l-1,1.1 z" fill="#52b1d9"/></svg></div>
<div style="left:947.40px;top:4.30px;width:12.50px;height:12.60px;background:#222f38;border-radius:1px;"><svg viewBox="0 0 12.5 12.6" style="left:0;top:0;width:12.5px;height:12.6px"><path d="M5.7,2.4 h1.1 l0.9,9.4 h-2.9 z" fill="#5ab5dc"/><g fill="none" stroke="#4aa6d0" stroke-width="0.9"><path d="M3.4,2.5 q2.9,-1.8 5.8,0"/></g><path d="M5.2,6.3 h2.1 M5,8.8 h2.5" stroke="#2a6a8c" stroke-width="0.5"/></svg></div>
<svg viewBox="-4 -4 8 8" style="left:984.00px;top:6.90px;width:8px;height:8px"><path d="M-2.1,-2.1 L2.1,2.1 M2.1,-2.1 L-2.1,2.1" stroke="#6b7a89" stroke-width="0.9" fill="none"/></svg>
<svg viewBox="-4 -4 8 8" style="left:985.00px;top:24.30px;width:8px;height:8px"><path d="M-2.1,-2.1 L2.1,2.1 M2.1,-2.1 L-2.1,2.1" stroke="#5f6e7d" stroke-width="0.9" fill="none"/></svg>
<span class="t f3" style="left:366.10px;transform-origin:0 0;top:42.93px;font-size:6.86px;color:#b0bbc6;transform:scaleX(0.9068);">TRIGGERS</span>
<div class="sbtn" style="left:521.25px;top:43.00px;width:28.75px;height:10.00px;"></div>
<span class="t f4" style="left:525.48px;transform-origin:0 0;top:42.62px;font-size:6.58px;color:#f3f6f9;transform:scaleX(0.9258);">CLONE</span>
<svg viewBox="-5 -4 10 8" style="left:558.00px;top:44.20px;width:10px;height:8px"><path d="M-3,1.5 L0,-1.5 L3,1.5" stroke="#dde5ee" stroke-width="1.25" fill="none"/></svg>
<svg viewBox="-5 -4 10 8" style="left:573.75px;top:43.90px;width:10px;height:8px"><path d="M-3,-1.5 L0,1.5 L3,-1.5" stroke="#dde5ee" stroke-width="1.25" fill="none"/></svg>
<div style="left:365.60px;top:55.80px;width:219.40px;height:210.10px;background:#33475a;border-radius:1px;"></div>
<div class="lst" style="left:367.00px;top:57.00px;width:216.60px;height:207.70px;"></div>
<span class="t f3" style="left:591.60px;transform-origin:0 0;top:42.93px;font-size:6.86px;color:#b0bbc6;transform:scaleX(0.9243);">CONDITIONS</span>
<div class="sbtn" style="left:724.50px;top:43.00px;width:29.25px;height:10.00px;"></div>
<span class="t f4" style="left:728.98px;transform-origin:0 0;top:42.62px;font-size:6.58px;color:#f3f6f9;transform:scaleX(0.9258);">CLONE</span>
<svg viewBox="-5 -4 10 8" style="left:761.75px;top:44.20px;width:10px;height:8px"><path d="M-3,1.5 L0,-1.5 L3,1.5" stroke="#dde5ee" stroke-width="1.25" fill="none"/></svg>
<svg viewBox="-5 -4 10 8" style="left:777.75px;top:43.90px;width:10px;height:8px"><path d="M-3,-1.5 L0,1.5 L3,-1.5" stroke="#dde5ee" stroke-width="1.25" fill="none"/></svg>
<div style="left:591.10px;top:55.80px;width:198.00px;height:210.10px;background:#33475a;border-radius:1px;"></div>
<div class="lst" style="left:592.50px;top:57.00px;width:195.20px;height:207.70px;"></div>
<span class="t f3" style="left:795.35px;transform-origin:0 0;top:42.93px;font-size:6.86px;color:#b0bbc6;transform:scaleX(0.9348);">ACTIONS</span>
<div class="sbtn" style="left:930.50px;top:43.00px;width:29.00px;height:10.00px;"></div>
<span class="t f4" style="left:934.85px;transform-origin:0 0;top:42.62px;font-size:6.58px;color:#f3f6f9;transform:scaleX(0.9258);">CLONE</span>
<svg viewBox="-5 -4 10 8" style="left:967.50px;top:44.20px;width:10px;height:8px"><path d="M-3,1.5 L0,-1.5 L3,1.5" stroke="#dde5ee" stroke-width="1.25" fill="none"/></svg>
<svg viewBox="-5 -4 10 8" style="left:983.00px;top:43.90px;width:10px;height:8px"><path d="M-3,-1.5 L0,1.5 L3,-1.5" stroke="#dde5ee" stroke-width="1.25" fill="none"/></svg>
<div style="left:795.20px;top:55.80px;width:198.00px;height:210.10px;background:#33475a;border-radius:1px;"></div>
<div class="lst" style="left:796.60px;top:57.00px;width:195.20px;height:207.70px;"></div>
<span class="t f3" style="left:372.00px;transform-origin:0 0;top:56.03px;font-size:6.58px;color:#e6ebf0;transform:scaleX(0.8532);">1 ONCE (Flag1-1, NO EVENT)</span>
<span class="t f3" style="left:372.00px;transform-origin:0 0;top:66.45px;font-size:6.58px;color:#e6ebf0;transform:scaleX(0.8551);">1 ONCE (Day, NO EVENT)</span>
<span class="t f3" style="left:372.00px;transform-origin:0 0;top:76.87px;font-size:6.58px;color:#e6ebf0;transform:scaleX(0.8474);">1 ONCE (Night, NO EVENT)</span>
<div style="left:367.00px;top:88.06px;width:216.60px;height:10.22px;background:#19232d;"></div>
<span class="t f3" style="left:372.00px;transform-origin:0 0;top:87.29px;font-size:6.58px;color:#5b9cb0;transform:scaleX(0.8536);">1 ONCE (Rain, NO EVENT)</span>
<span class="t f3" style="left:372.00px;transform-origin:0 0;top:97.71px;font-size:6.58px;color:#e6ebf0;transform:scaleX(0.8558);">1 ONCE (Winter, NO EVENT)</span>
<div style="left:592.50px;top:56.80px;width:195.20px;height:10.22px;background:#19232d;"></div>
<span class="t f3" style="left:597.50px;transform-origin:0 0;top:56.03px;font-size:6.58px;color:#8ab6c7;transform:scaleX(0.8739);">FLAG EQUALS ("1", 3)</span>
<div style="left:796.60px;top:56.80px;width:195.20px;height:10.22px;background:#19232d;"></div>
<span class="t f3" style="left:801.75px;transform-origin:0 0;top:56.03px;font-size:6.58px;color:#8ab6c7;transform:scaleX(0.8792);">LOAD MISSION (WeatherTimeExample-Rain.miz)</span>
<div class="btn" style="left:366.00px;top:269.00px;width:52.00px;height:12.50px;"></div>
<span class="t f4" style="left:384.85px;transform-origin:0 0;top:269.87px;font-size:6.58px;color:#f3f6f9;transform:scaleX(0.9201);">NEW</span>
<div class="btn" style="left:532.50px;top:269.00px;width:51.75px;height:12.50px;"></div>
<span class="t f4" style="left:546.88px;transform-origin:0 0;top:269.87px;font-size:6.58px;color:#f3f6f9;transform:scaleX(0.9245);">DELETE</span>
<div class="btn" style="left:591.25px;top:269.00px;width:51.75px;height:12.50px;"></div>
<span class="t f4" style="left:609.98px;transform-origin:0 0;top:269.87px;font-size:6.58px;color:#f3f6f9;transform:scaleX(0.9201);">NEW</span>
<div class="sbtn" style="left:675.50px;top:270.00px;width:28.75px;height:10.50px;"></div>
<span class="t f4" style="left:685.38px;transform-origin:0 0;top:269.87px;font-size:6.58px;color:#f3f6f9;transform:scaleX(0.9378);">OR</span>
<div class="btn" style="left:737.00px;top:269.00px;width:51.75px;height:12.50px;"></div>
<span class="t f4" style="left:751.38px;transform-origin:0 0;top:269.87px;font-size:6.58px;color:#f3f6f9;transform:scaleX(0.9245);">DELETE</span>
<div class="btn" style="left:796.25px;top:269.00px;width:51.50px;height:12.50px;"></div>
<span class="t f4" style="left:814.85px;transform-origin:0 0;top:269.87px;font-size:6.58px;color:#f3f6f9;transform:scaleX(0.9201);">NEW</span>
<div class="btn" style="left:941.25px;top:269.00px;width:51.75px;height:12.50px;"></div>
<span class="t f4" style="left:955.62px;transform-origin:0 0;top:269.87px;font-size:6.58px;color:#f3f6f9;transform:scaleX(0.9245);">DELETE</span>
<span class="t f3" style="left:367.00px;transform-origin:0 0;top:284.93px;font-size:6.86px;color:#b0bbc6;transform:scaleX(0.9284);">TYPE:</span>
<div class="inp" style="left:484.55px;top:284.70px;width:100.70px;height:11.60px;"></div>
<span class="t f3" style="left:488.25px;transform-origin:0 0;top:284.73px;font-size:6.86px;color:#d6dde4;transform:scaleX(0.9548);">1 ONCE</span>
<svg viewBox="-4 -3 8 6" style="left:576.05px;top:287.70px;width:8px;height:6px"><path d="M-2,-1 L0,1 L2,-1" stroke="#8795a3" stroke-width="0.8" fill="none"/></svg>
<span class="t f3" style="left:591.25px;transform-origin:0 0;top:284.93px;font-size:6.86px;color:#b0bbc6;transform:scaleX(0.9313);">TYPE:</span>
<div class="inp" style="left:689.55px;top:284.70px;width:99.70px;height:11.60px;"></div>
<span class="t f3" style="left:693.00px;transform-origin:0 0;top:284.73px;font-size:6.86px;color:#d6dde4;transform:scaleX(0.9923);">FLAG EQUALS</span>
<svg viewBox="-4 -3 8 6" style="left:780.05px;top:287.70px;width:8px;height:6px"><path d="M-2,-1 L0,1 L2,-1" stroke="#8795a3" stroke-width="0.8" fill="none"/></svg>
<span class="t f3" style="left:795.75px;transform-origin:0 0;top:284.93px;font-size:6.86px;color:#b0bbc6;transform:scaleX(0.9003);">ACTION:</span>
<div class="inp" style="left:862.55px;top:284.70px;width:130.45px;height:11.60px;"></div>
<span class="t f3" style="left:865.75px;transform-origin:0 0;top:284.73px;font-size:6.86px;color:#d6dde4;transform:scaleX(0.9639);">LOAD MISSION</span>
<svg viewBox="-4 -3 8 6" style="left:983.80px;top:287.70px;width:8px;height:6px"><path d="M-2,-1 L0,1 L2,-1" stroke="#8795a3" stroke-width="0.8" fill="none"/></svg>
<span class="t f3" style="left:367.00px;transform-origin:0 0;top:307.43px;font-size:6.86px;color:#b0bbc6;transform:scaleX(0.9187);">NAME:</span>
<div class="inp" style="left:505.80px;top:307.20px;width:79.45px;height:11.10px;"></div>
<span class="t f3" style="left:510.00px;transform-origin:0 0;top:306.98px;font-size:6.86px;color:#d6dde4;transform:scaleX(0.9230);">Rain</span>
<span class="t f3" style="left:591.25px;transform-origin:0 0;top:307.43px;font-size:6.86px;color:#b0bbc6;transform:scaleX(0.8561);">FLAG:</span>
<div class="inp" style="left:710.80px;top:307.20px;width:78.45px;height:11.10px;"></div>
<span class="t f3" style="left:714.40px;transform-origin:0 0;top:306.98px;font-size:6.86px;color:#d6dde4;">1</span>
<span class="t f3" style="left:795.75px;transform-origin:0 0;top:306.73px;font-size:6.86px;color:#b0bbc6;transform:scaleX(0.8794);">FILE:</span>
<div class="inp" style="left:882.70px;top:306.90px;width:77.60px;height:11.30px;overflow:hidden;"></div>
<div style="left:884px;top:307.5px;width:73.2px;height:10px;overflow:hidden;">
<span class="t f3" style="left:2.75px;transform-origin:0 0;top:-0.77px;font-size:6.86px;color:#d6dde4;transform:scaleX(0.9276);">WeatherTimeExample-Rain.miz</span>
</div>
<div class="sbtn" style="left:961.25px;top:307.00px;width:30.75px;height:10.50px;"></div>
<span class="t f4" style="left:968.12px;transform-origin:0 0;top:306.87px;font-size:6.58px;color:#f3f6f9;transform:scaleX(0.9249);">OPEN</span>
<span class="t f3" style="left:367.00px;transform-origin:0 0;top:318.73px;font-size:6.86px;color:#b0bbc6;transform:scaleX(0.9206);">EVENT:</span>
<div class="inp" style="left:505.80px;top:319.20px;width:79.45px;height:10.35px;"></div>
<span class="t f3" style="left:509.00px;transform-origin:0 0;top:318.60px;font-size:6.86px;color:#d6dde4;transform:scaleX(0.9739);">NO EVENT</span>
<svg viewBox="-4 -3 8 6" style="left:576.05px;top:321.57px;width:8px;height:6px"><path d="M-2,-1 L0,1 L2,-1" stroke="#8795a3" stroke-width="0.8" fill="none"/></svg>
<span class="t f3" style="left:591.25px;transform-origin:0 0;top:318.73px;font-size:6.86px;color:#b0bbc6;transform:scaleX(0.9032);">VALUE:</span>
<div class="inp" style="left:711.00px;top:319.30px;width:78.25px;height:10.15px;"></div>
<svg viewBox="0 0 10 6" style="left:713.90px;top:321.48px;width:10px;height:6px"><path d="M2.9,0.7 L0.9,3 L2.9,5.3 M6.4,0.7 L8.4,3 L6.4,5.3" stroke="#a9b7c5" stroke-width="0.9" fill="none"/></svg>
<span class="t f3" style="left:726.80px;transform-origin:0 0;top:318.60px;font-size:6.86px;color:#d6dde4;">3</span>
<span class="t f3" style="left:367.00px;transform-origin:0 0;top:339.13px;font-size:6.86px;color:#b0bbc6;transform:scaleX(0.9767);">COLOR</span>
<span class="t f3" style="left:367.20px;transform-origin:0 0;top:353.83px;font-size:6.86px;color:#b0bbc6;">R</span>
<div class="inp" style="left:375.50px;top:354.50px;width:42.80px;height:10.20px;background:#23313e;"></div>
<svg viewBox="0 0 10 6" style="left:379.30px;top:356.70px;width:10px;height:6px"><path d="M2.9,0.7 L0.9,3 L2.9,5.3 M6.4,0.7 L8.4,3 L6.4,5.3" stroke="#a9b7c5" stroke-width="0.9" fill="none"/></svg>
<span class="t f3" style="left:392.00px;transform-origin:0 0;top:353.83px;font-size:6.86px;color:#d6dde4;transform:scaleX(0.9342);">255</span>
<span class="t f3" style="left:367.20px;transform-origin:0 0;top:366.43px;font-size:6.86px;color:#b0bbc6;">G</span>
<div class="inp" style="left:375.50px;top:366.90px;width:42.80px;height:10.10px;background:#23313e;"></div>
<svg viewBox="0 0 10 6" style="left:379.30px;top:369.05px;width:10px;height:6px"><path d="M2.9,0.7 L0.9,3 L2.9,5.3 M6.4,0.7 L8.4,3 L6.4,5.3" stroke="#a9b7c5" stroke-width="0.9" fill="none"/></svg>
<span class="t f3" style="left:392.00px;transform-origin:0 0;top:366.18px;font-size:6.86px;color:#d6dde4;transform:scaleX(0.9342);">255</span>
<span class="t f3" style="left:367.20px;transform-origin:0 0;top:378.83px;font-size:6.86px;color:#b0bbc6;">B</span>
<div class="inp" style="left:375.50px;top:379.20px;width:42.80px;height:10.30px;background:#23313e;"></div>
<svg viewBox="0 0 10 6" style="left:379.30px;top:381.45px;width:10px;height:6px"><path d="M2.9,0.7 L0.9,3 L2.9,5.3 M6.4,0.7 L8.4,3 L6.4,5.3" stroke="#a9b7c5" stroke-width="0.9" fill="none"/></svg>
<span class="t f3" style="left:392.00px;transform-origin:0 0;top:378.58px;font-size:6.86px;color:#d6dde4;transform:scaleX(0.9342);">255</span>
<svg viewBox="423.25 344.2 93.75 58.10" style="left:423.25px;top:344.2px;width:93.75px;height:58.10px"><rect x="423.25" y="344.2" width="93.75" height="58.10" fill="#86a09c"/><rect x="423.75" y="344.70" width="22.44" height="7.30" fill="#000000"/><rect x="447.19" y="344.70" width="22.44" height="7.30" fill="#808080"/><rect x="470.62" y="344.70" width="22.44" height="7.30" fill="#800000"/><rect x="494.06" y="344.70" width="22.44" height="7.30" fill="#808000"/><rect x="423.75" y="353.00" width="22.44" height="7.30" fill="#008000"/><rect x="447.19" y="353.00" width="22.44" height="7.30" fill="#008080"/><rect x="470.62" y="353.00" width="22.44" height="7.30" fill="#000080"/><rect x="494.06" y="353.00" width="22.44" height="7.30" fill="#800080"/><rect x="423.75" y="361.30" width="22.44" height="7.30" fill="#808040"/><rect x="447.19" y="361.30" width="22.44" height="7.30" fill="#004040"/><rect x="470.62" y="361.30" width="22.44" height="7.30" fill="#0080ff"/><rect x="494.06" y="361.30" width="22.44" height="7.30" fill="#004080"/><rect x="423.75" y="369.60" width="22.44" height="7.30" fill="#8000ff"/><rect x="447.19" y="369.60" width="22.44" height="7.30" fill="#804000"/><rect x="470.62" y="369.60" width="22.44" height="7.30" fill="#ffffff"/><rect x="494.06" y="369.60" width="22.44" height="7.30" fill="#c0c0c0"/><rect x="423.75" y="377.90" width="22.44" height="7.30" fill="#ff0000"/><rect x="447.19" y="377.90" width="22.44" height="7.30" fill="#ffff00"/><rect x="470.62" y="377.90" width="22.44" height="7.30" fill="#00ff00"/><rect x="494.06" y="377.90" width="22.44" height="7.30" fill="#00ffff"/><rect x="423.75" y="386.20" width="22.44" height="7.30" fill="#0000ff"/><rect x="447.19" y="386.20" width="22.44" height="7.30" fill="#ff00ff"/><rect x="470.62" y="386.20" width="22.44" height="7.30" fill="#ffff80"/><rect x="494.06" y="386.20" width="22.44" height="7.30" fill="#00ff80"/><rect x="423.75" y="394.50" width="22.44" height="7.30" fill="#80ffff"/><rect x="447.19" y="394.50" width="22.44" height="7.30" fill="#8080ff"/><rect x="470.62" y="394.50" width="22.44" height="7.30" fill="#ff0080"/><rect x="494.06" y="394.50" width="22.44" height="7.30" fill="#e888a8"/></svg>
<div style="left:529.00px;top:363.80px;width:23.00px;height:24.00px;background:#ffffff;"></div>
<div style="left:365.00px;top:410.00px;width:628.30px;height:19.50px;border:0.6px solid #263545;border-radius:1px;"></div>
<span class="t f3" style="left:368.75px;transform-origin:0 0;top:414.63px;font-size:6.86px;color:#b0bbc6;transform:scaleX(0.9170);">INITIALIZATION SCRIPT</span>
<div class="sbtn" style="left:611.50px;top:415.00px;width:31.90px;height:10.20px;"></div>
<span class="t f4" style="left:618.85px;transform-origin:0 0;top:414.72px;font-size:6.58px;color:#f3f6f9;transform:scaleX(0.9357);">OPEN</span>
<div class="sbtn" style="left:651.40px;top:415.00px;width:32.10px;height:10.20px;"></div>
<span class="t f4" style="left:657.65px;transform-origin:0 0;top:414.72px;font-size:6.58px;color:#f3f6f9;transform:scaleX(0.9349);">RESET</span>
<div class="inp" style="left:691.00px;top:415.00px;width:111.40px;height:10.50px;"></div>
<span class="t f3" style="left:825.30px;transform-origin:0 0;top:414.63px;font-size:6.86px;color:#b0bbc6;transform:scaleX(0.9092);">CODE</span>
<div class="inp" style="left:854.00px;top:415.00px;width:137.00px;height:10.50px;"></div>
</aside>
<footer id="statusbar">
<div style="left:0.00px;top:546.00px;width:1000.00px;height:1.30px;background:#1c2935;"></div>
<span class="t f3" style="left:6.60px;transform-origin:0 0;top:548.12px;font-size:6.72px;color:#b9c3cd;transform:scaleX(1.0091);">DFLT</span>
<svg viewBox="-4 -3 8 6" style="left:22.6px;top:551.2px;width:8px;height:6px"><path d="M-2,-1 L0,1 L2,-1" stroke="#9aa7b4" stroke-width="0.8" fill="none"/></svg>
<span class="t f3" style="left:78.60px;transform-origin:0 0;top:548.12px;font-size:6.72px;color:#b9c3cd;transform:scaleX(1.0096);">LL</span>
<div style="left:87.10px;top:549.50px;width:0.60px;height:9.00px;background:#405265;"></div>
<div style="left:166.30px;top:549.50px;width:0.60px;height:9.00px;background:#405265;"></div>
<div style="left:244.10px;top:549.50px;width:0.60px;height:9.00px;background:#405265;"></div>
<div style="left:290.70px;top:549.50px;width:0.60px;height:9.00px;background:#405265;"></div>
<span class="t f3" style="left:90.60px;transform-origin:0 0;top:548.12px;font-size:6.72px;color:#b9c3cd;transform:scaleX(0.9649);">N 41°55'46", E 41°51'45"</span>
<span class="t f4" style="left:201.60px;transform-origin:0 0;top:548.12px;font-size:6.72px;color:#e8edf2;transform:scaleX(0.9527);">ALT</span>
<span class="t f3" style="left:220.00px;transform-origin:0 0;top:548.12px;font-size:6.72px;color:#b9c3cd;transform:scaleX(0.9099);">59</span>
<span class="t f4" style="left:250.40px;transform-origin:0 0;top:548.12px;font-size:6.72px;color:#e8edf2;transform:scaleX(0.8452);">δM</span>
<span class="t f3" style="left:265.00px;transform-origin:0 0;top:548.12px;font-size:6.72px;color:#b9c3cd;transform:scaleX(0.9377);">+4.6°</span>
<span class="t f4" style="left:305.00px;transform-origin:0 0;top:548.12px;font-size:6.72px;color:#eef2f6;transform:scaleX(0.8971);">PAN/SELECT</span>
<div style="left:472.40px;top:549.60px;width:16.00px;height:8.00px;background:#1d2a36;border-radius:1px;"></div>
<span class="t f4" style="left:280.40px;width:400px;text-align:center;transform-origin:50% 0;top:547.81px;font-size:6.04px;color:#f3f6f9;">MAP</span>
<div style="left:494.80px;top:549.60px;width:15.70px;height:8.00px;background:#1d2a36;border-radius:1px;"></div>
<span class="t f4" style="left:302.65px;width:400px;text-align:center;transform-origin:50% 0;top:547.81px;font-size:6.04px;color:#f3f6f9;">SAT</span>
<div style="left:515.90px;top:549.60px;width:17.30px;height:8.00px;background:#4b86c8;border-radius:1px;"></div>
<span class="t f4" style="left:324.55px;width:400px;text-align:center;transform-origin:50% 0;top:547.81px;font-size:6.04px;color:#f3f6f9;text-shadow:0 0 1px #000,0 0 1px #000;">ALT</span>
<div style="left:550.00px;top:549.60px;width:17.00px;height:8.00px;background:#4b86c8;border-radius:1px;"><svg viewBox="0 0 17 8" style="left:0;top:0;width:17px;height:8px"><rect x="4" y="2" width="7" height="4" fill="none" stroke="#f3f6f9" stroke-width="1"/><path d="M2.5,4 h12" stroke="#10202e" stroke-width="1.1"/><path d="M11,4 h3.5" stroke="#f3f6f9" stroke-width="0.9"/></svg></div>
<div style="left:572.40px;top:549.60px;width:15.60px;height:8.00px;background:#1d2a36;border-radius:1px;"><svg viewBox="0 0 15.6 8" style="left:0;top:0;width:15.6px;height:8px"><circle cx="7.8" cy="4" r="2.5" fill="none" stroke="#c5ced6" stroke-width="0.8"/><path d="M7.8,0.7 v1 M7.8,6.3 v1 M4.7,2.2 l0.8,0.6 M10.9,2.2 l-0.8,0.6 M4.7,5.8 l0.8,-0.6 M10.9,5.8 l-0.8,-0.6" stroke="#c5ced6" stroke-width="0.8"/><path d="M7.8,2.8 v1.3 h1" stroke="#c5ced6" stroke-width="0.5" fill="none"/></svg></div>
<span class="t f3" style="left:936.40px;transform-origin:0 0;top:548.22px;font-size:6.72px;color:#a9b4bf;transform:scaleX(0.9525);">11.04.2024 2:03:14</span>
</footer>
<div style="left:998.30px;top:0.00px;width:1.70px;height:561.00px;background:#1e2c3b;"></div>
</div>
</body>
</html>
